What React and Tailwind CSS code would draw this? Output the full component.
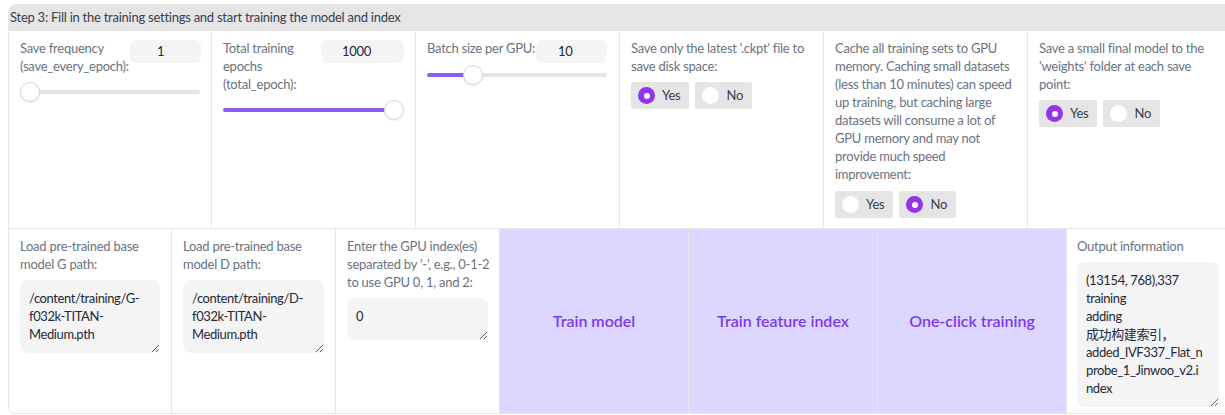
import React from "react";

const FONT = "font-['Lato','Noto_Sans_CJK_SC',sans-serif]";

function NumBox({ value, w, pl }) {
  return (
    <div
      className={`h-[23px] mt-[1px] shrink-0 rounded-md bg-[#f4f4f5] text-[13px] leading-[23px] text-[#1f2937] ${w} ${pl}`}
    >
      {value}
    </div>
  );
}

function Slider({ pct, mt }) {
  return (
    <div className={`relative h-5 w-full ${mt}`}>
      <div className="absolute left-0 right-0 top-[8px] h-1 rounded-full bg-[#e5e5e5]" />
      {pct > 0 && (
        <div
          className="absolute left-0 top-[8px] h-1 rounded-full bg-[#8b5cf6]"
          style={{ width: `calc((100% - 20px) * ${pct} + 10px)` }}
        />
      )}
      <div
        className="absolute top-0 h-5 w-5 rounded-full bg-white border border-[#d4d4d8] shadow-[0_1px_2px_rgba(0,0,0,0.08)]"
        style={{ left: `calc((100% - 20px) * ${pct})` }}
      />
    </div>
  );
}

function Radio({ label, checked }) {
  return (
    <div className="flex items-center h-[27px] pl-[7px] pr-[9px] gap-[7px] bg-[#e5e5e5] rounded-[2px] text-[13px] text-[#374151]">
      {checked ? (
        <span className="w-[17px] h-[17px] rounded-full bg-[#9333ea] flex items-center justify-center">
          <span className="w-[6px] h-[6px] rounded-full bg-white" />
        </span>
      ) : (
        <span className="w-[17px] h-[17px] rounded-full bg-white" />
      )}
      <span>{label}</span>
    </div>
  );
}

function Label({ lines }) {
  return (
    <div className="text-[13px] leading-[18px] text-[#6b7280] whitespace-nowrap">
      {lines.map((l, i) => (
        <div key={i}>{l}</div>
      ))}
    </div>
  );
}

function Area({ value, h, w = "w-full" }) {
  return (
    <textarea
      readOnly
      wrap="off"
      defaultValue={value}
      className={`block mt-[7px] ${w} ${h} rounded-lg bg-[#f4f4f5] px-[9px] pt-[9px] text-[13px] leading-[18px] tracking-[-0.4px] text-[#1f2937] overflow-hidden outline-none ${FONT}`}
    />
  );
}

export default function App() {
  return (
    <div className={`w-[1225px] h-[415px] overflow-hidden bg-white pl-2 pt-1 tracking-[-0.25px] ${FONT}`}>
      <div className="w-[1225px] border border-[#e5e5e5] rounded-lg overflow-hidden">
        <div className="h-[26px] bg-[#e5e5e5] flex items-center pl-[1px] text-[13px] text-[#374151]">
          Step 3: Fill in the training settings and start training the model and index
        </div>

        <div className="grid grid-cols-[203px_204px_204px_204px_204px_204px] h-[197px] divide-x divide-[#e5e5e5]">
          <div className="px-[11px] pt-2">
            <div className="flex justify-between items-start">
              <Label lines={["Save frequency", "(save_every_epoch):"]} />
              <div className="mr-[-1px]">
                <NumBox value="1" w="w-[71px]" pl="pl-[27px]" />
              </div>
            </div>
            <Slider pct={0} mt="mt-[7px]" />
          </div>

          <div className="px-[11px] pt-2">
            <div className="flex justify-between items-start">
              <Label lines={["Total training", "epochs", "(total_epoch):"]} />
              <NumBox value="1000" w="w-[83px]" pl="pl-[21px]" />
            </div>
            <Slider pct={1} mt="mt-[7px]" />
          </div>

          <div className="pl-[11px] pr-[12px] pt-2">
            <div className="flex justify-between items-start h-[24px]">
              <Label lines={["Batch size per GPU:"]} />
              <NumBox value="10" w="w-[71px]" pl="pl-[22px]" />
            </div>
            <Slider pct={0.225} mt="mt-[2px]" />
          </div>

          <div className="px-[11px] pt-2">
            <Label lines={["Save only the latest '.ckpt' file to", "save disk space:"]} />
            <div className="flex gap-[6px] mt-[7px]">
              <Radio label="Yes" checked />
              <Radio label="No" />
            </div>
          </div>

          <div className="px-[11px] pt-2">
            <Label
              lines={[
                "Cache all training sets to GPU",
                "memory. Caching small datasets",
                "(less than 10 minutes) can speed",
                "up training, but caching large",
                "datasets will consume a lot of",
                "GPU memory and may not",
                "provide much speed",
                "improvement:",
              ]}
            />
            <div className="flex gap-[6px] mt-2">
              <Radio label="Yes" />
              <Radio label="No" checked />
            </div>
          </div>

          <div className="px-[11px] pt-2">
            <Label
              lines={["Save a small final model to the", "'weights' folder at each save", "point:"]}
            />
            <div className="flex gap-[6px] mt-[7px]">
              <Radio label="Yes" checked />
              <Radio label="No" />
            </div>
          </div>
        </div>

        <div className="grid grid-cols-[163px_164px_164px_189px_189px_189px_1fr] h-[185px] border-t border-[#e5e5e5] divide-x divide-[#e5e5e5]">
          <div className="px-[11px] pt-2">
            <Label lines={["Load pre-trained base", "model G path:"]} />
            <Area value={"/content/training/G-\nf032k-TITAN-\nMedium.pth"} h="h-[73px]" />
          </div>
          <div className="px-[11px] pt-2">
            <Label lines={["Load pre-trained base", "model D path:"]} />
            <Area value={"/content/training/D-\nf032k-TITAN-\nMedium.pth"} h="h-[73px]" />
          </div>
          <div className="px-[11px] pt-2">
            <Label
              lines={["Enter the GPU index(es)", "separated by '-', e.g., 0-1-2", "to use GPU 0, 1, and 2:"]}
            />
            <Area value="0" h="h-[42px]" />
          </div>
          <button className="bg-[#ddd6fe] text-[#7c3aed] font-semibold text-[16px] tracking-normal">Train model</button>
          <button className="bg-[#ddd6fe] text-[#7c3aed] font-semibold text-[16px] tracking-normal">Train feature index</button>
          <button className="bg-[#ddd6fe] text-[#7c3aed] font-semibold text-[16px] tracking-normal">One-click training</button>
          <div className="pl-[10px] pt-2">
            <Label lines={["Output information"]} />
            <Area
              value={
                "(13154, 768),337\ntraining\nadding\n成功构建索引，\nadded_IVF337_Flat_n\nprobe_1_Jinwoo_v2.i\nndex"
              }
              h="h-[145px]"
              w="w-[142px]"
            />
          </div>
        </div>
      </div>
    </div>
  );
}
